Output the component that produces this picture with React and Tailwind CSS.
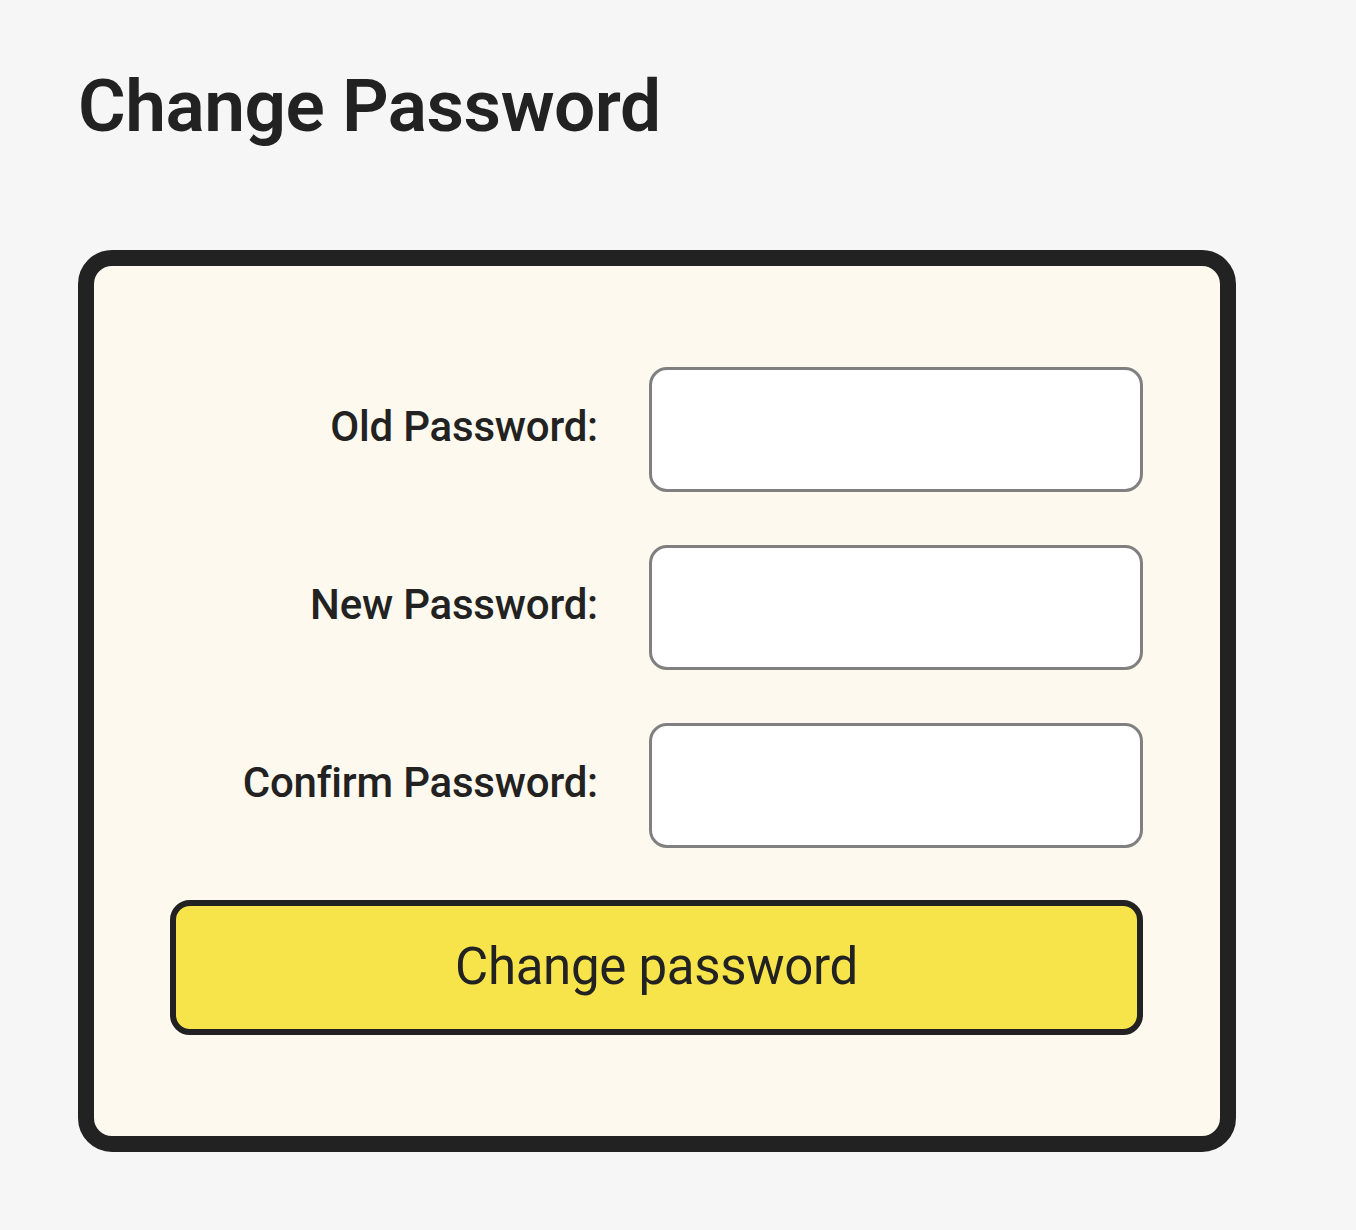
import React from "react";

const fields = [
  { id: "old", label: "Old Password:" },
  { id: "new", label: "New Password:" },
  { id: "confirm", label: "Confirm Password:" },
];

export default function App() {
  return (
    <div className="min-h-[1230px] bg-[#f6f6f6] text-[#222222] font-['Roboto',sans-serif]">
      <div className="pl-[78px] pt-[61px]">
        <h1 className="text-[73px] leading-[90px] font-semibold tracking-[-0.5px]">Change Password</h1>

        <form
          className="mt-[99px] w-[1158px] h-[902px] rounded-[34px] border-[16px] border-[#222222] bg-[#fdf9ee] px-[76px] pt-[101px]"
          onSubmit={(e) => e.preventDefault()}
        >
          <div className="grid grid-cols-[428px_494px] gap-x-[51px] gap-y-[53px]">
            {fields.map((f) => (
              <React.Fragment key={f.id}>
                <label htmlFor={f.id} className="flex items-center justify-end pb-[6px] text-[42px] font-medium tracking-[-0.2px]">
                  {f.label}
                </label>
                <input
                  id={f.id}
                  type="password"
                  className="h-[125px] rounded-[18px] border-[3px] border-[#808080] bg-white px-4 text-[32px] outline-none"
                />
              </React.Fragment>
            ))}
          </div>

          <button
            type="submit"
            className="mt-[52px] w-[973px] h-[135px] rounded-[20px] border-[6px] border-[#222222] bg-[#f7e44a] text-[51px] tracking-[-0.3px]"
          >
            Change password
          </button>
        </form>
      </div>
    </div>
  );
}
